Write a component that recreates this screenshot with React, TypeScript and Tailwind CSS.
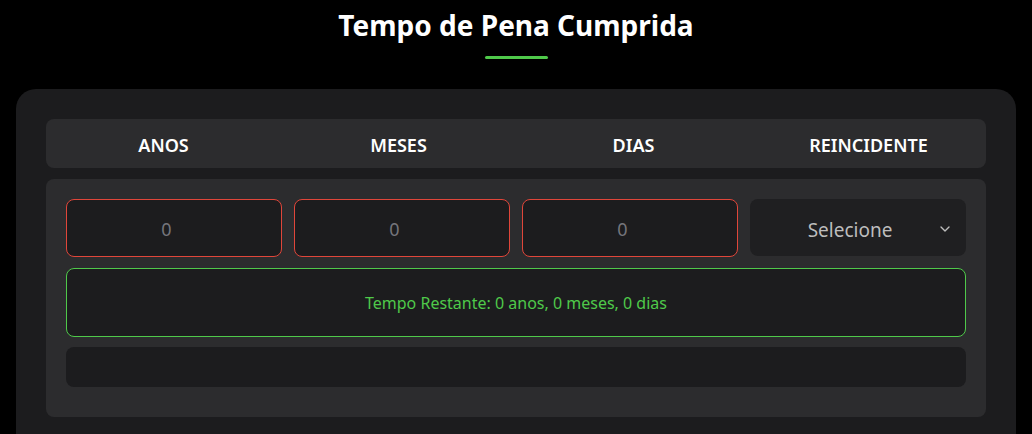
import { ChevronDown } from 'lucide-react';

const columns = ['ANOS', 'MESES', 'DIAS', 'REINCIDENTE'];

function NumberInput() {
  return (
    <input
      type="number"
      placeholder="0"
      className="h-[58px] w-full rounded-lg border border-[#e0463a] bg-[#1c1c1e] pt-[2px] text-center text-[18px] text-white outline-none placeholder:text-[#75757b]"
    />
  );
}

export default function App() {
  return (
    <div
      className="min-h-screen overflow-hidden bg-black px-4 text-white"
      style={{ fontFamily: '"Segoe UI", "Noto Sans", "Open Sans", sans-serif' }}
    >
      <div className="flex flex-col items-center pt-[5px]">
        <h1 className="text-[28px] font-bold leading-[40px]">Tempo de Pena Cumprida</h1>
        <div className="mt-[11px] h-[3px] w-[63px] rounded-full bg-[#4fc94a]" />
      </div>

      <section className="mt-[30px] rounded-[20px] bg-[#1c1c1e] px-[30px] pb-10 pt-[30px]">
        <div className="grid h-[49px] grid-cols-4 items-center rounded-lg bg-[#2c2c2e] pt-[3px]">
          {columns.map((label) => (
            <p key={label} className="text-center text-[18px] font-semibold">{label}</p>
          ))}
        </div>

        <div className="mt-[11px] rounded-lg bg-[#2c2c2e] px-5 pb-[30px] pt-5">
          <div className="grid grid-cols-4 gap-3">
            <NumberInput />
            <NumberInput />
            <NumberInput />
            <div className="relative flex h-[57px] items-center justify-center rounded-lg bg-[#1f1f21] pt-[5px]">
              <span className="pr-4 text-[19px] text-[#bdbdbd]">Selecione</span>
              <ChevronDown className="absolute right-[13px] top-[30px] h-4 w-4 -translate-y-1/2 text-[#bdbdbd]" strokeWidth={2} />
            </div>
          </div>

          <div className="mt-[11px] flex h-[69px] items-center justify-center rounded-lg border border-[#4fc94a] bg-[#1c1c1e] text-[16px] text-[#4fc94a]">
            Tempo Restante: 0 anos, 0 meses, 0 dias
          </div>

          <div className="mt-[10px] h-10 rounded-lg bg-[#1c1c1e]" />
        </div>
      </section>
    </div>
  );
}
